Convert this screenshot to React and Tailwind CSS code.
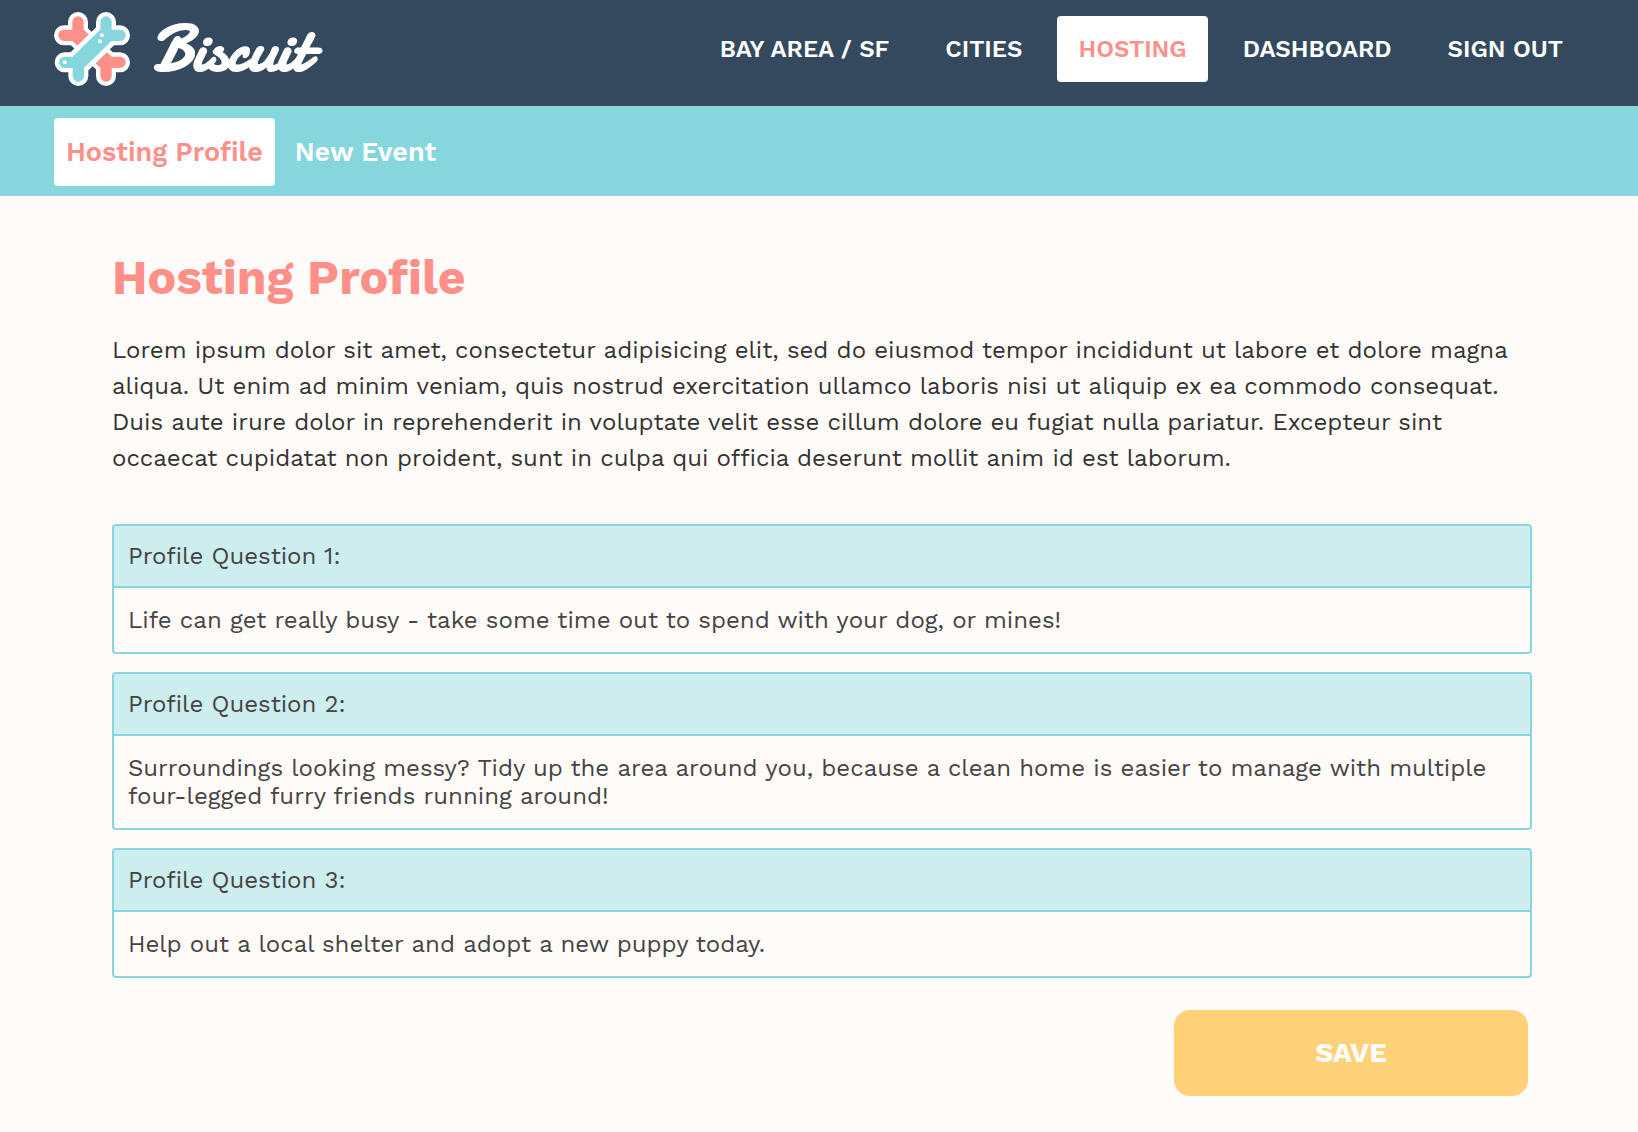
const NAV = ["BAY AREA / SF", "CITIES", "HOSTING", "DASHBOARD", "SIGN OUT"];

const INTRO =
  "Lorem ipsum dolor sit amet, consectetur adipisicing elit, sed do eiusmod tempor incididunt ut labore et dolore magna aliqua. Ut enim ad minim veniam, quis nostrud exercitation ullamco laboris nisi ut aliquip ex ea commodo consequat. Duis aute irure dolor in reprehenderit in voluptate velit esse cillum dolore eu fugiat nulla pariatur. Excepteur sint occaecat cupidatat non proident, sunt in culpa qui officia deserunt mollit anim id est laborum.";

const QUESTIONS = [
  { id: "q1", label: "Profile Question 1:", rows: 1, answer: "Life can get really busy - take some time out to spend with your dog, or mines!" },
  {
    id: "q2",
    label: "Profile Question 2:",
    rows: 2,
    answer:
      "Surroundings looking messy? Tidy up the area around you, because a clean home is easier to manage with multiple four-legged furry friends running around!",
  },
  { id: "q3", label: "Profile Question 3:", rows: 1, answer: "Help out a local shelter and adopt a new puppy today." },
];

function BonesIcon() {
  const pink = "M114 66V106H72M198 228V187H240";
  const blue = "M198 66V106H240M115 228V187H74";
  return (
    <svg viewBox="42 36 228 222" className="h-[74px] w-[76px] shrink-0" fill="none" strokeLinecap="round" strokeLinejoin="round" aria-hidden="true">
      <path d={pink} stroke="#fff" strokeWidth="60" />
      <path d="M114 106L198 187" stroke="#fff" strokeWidth="72" strokeLinecap="butt" />
      <path d={pink} stroke="#ff8f89" strokeWidth="34" />
      <path d="M114 106L198 187" stroke="#ff8f89" strokeWidth="48" strokeLinecap="butt" />
      <path d={blue} stroke="#fff" strokeWidth="60" />
      <path d="M115 187L198 106" stroke="#fff" strokeWidth="76" strokeLinecap="butt" />
      <path d={blue} stroke="#86d6de" strokeWidth="34" />
      <path d="M115 187L198 106" stroke="#86d6de" strokeWidth="48" strokeLinecap="butt" />
      <g fill="#fff">
        <circle cx="186" cy="106" r="6" />
        <circle cx="180" cy="124" r="6" />
        <circle cx="74" cy="187" r="6" />
      </g>
    </svg>
  );
}

export default function App() {
  return (
    <div className="min-h-screen bg-[#fffbf8] font-['Work_Sans',Inter,sans-serif] text-[#333]">
      <header className="flex items-start justify-between bg-[#34495e] pr-[54px] pb-5 pl-[54px]">
        <a href="#home" aria-label="Biscuit" className="flex h-[86px] items-center gap-[22px] pt-3 text-white">
          <BonesIcon />
          <span className="font-[Damion,cursive] text-[65px] leading-[74px] font-bold">Biscuit</span>
        </a>
        <nav className="flex gap-[14px] pt-4">
          {NAV.map((item) => (
            <a
              key={item}
              href="#nav"
              className={
                item === "HOSTING"
                  ? "rounded bg-white px-[21px] text-[24px] leading-[66px] font-semibold whitespace-nowrap text-[#ff8f89]"
                  : "rounded px-[21px] text-[24px] leading-[66px] font-semibold whitespace-nowrap text-white"
              }
            >
              {item}
            </a>
          ))}
        </nav>
      </header>
      <nav className="flex gap-2 bg-[#86d6de] px-[54px] pt-3 pb-[10px] text-[27px] leading-[68px] font-semibold">
        <a href="#profile" className="rounded bg-white px-3 text-[#ff8f89]">Hosting Profile</a>
        <a href="#event" className="rounded px-3 text-white">New Event</a>
      </nav>
      <main className="pt-[52px] pr-[106px] pb-9 pl-28">
        <h1 className="text-[48px] leading-[60px] font-bold text-[#ff8f89]">Hosting Profile</h1>
        <p className="mt-6 text-[24px] leading-9">{INTRO}</p>
        <form className="mt-12" onSubmit={(e) => e.preventDefault()}>
          <div className="flex flex-col gap-[18px]">
            {QUESTIONS.map((q) => (
              <div key={q.id} className="overflow-hidden rounded border-2 border-[#86d6de] text-[24px] leading-7 text-[#444]">
                <label htmlFor={q.id} className="block border-b-2 border-[#86d6de] bg-[#ceedee] px-[14px] py-4">
                  {q.label}
                </label>
                <textarea id={q.id} rows={q.rows} defaultValue={q.answer} className="block w-full resize-none overflow-hidden bg-transparent px-[14px] py-[18px] outline-none" />
              </div>
            ))}
          </div>
          <div className="mt-8 flex justify-end pr-1">
            <button type="submit" className="w-1/4 rounded-2xl bg-[#ffd178] text-[28px] leading-[86px] font-bold text-white">
              SAVE
            </button>
          </div>
        </form>
      </main>
    </div>
  );
}
